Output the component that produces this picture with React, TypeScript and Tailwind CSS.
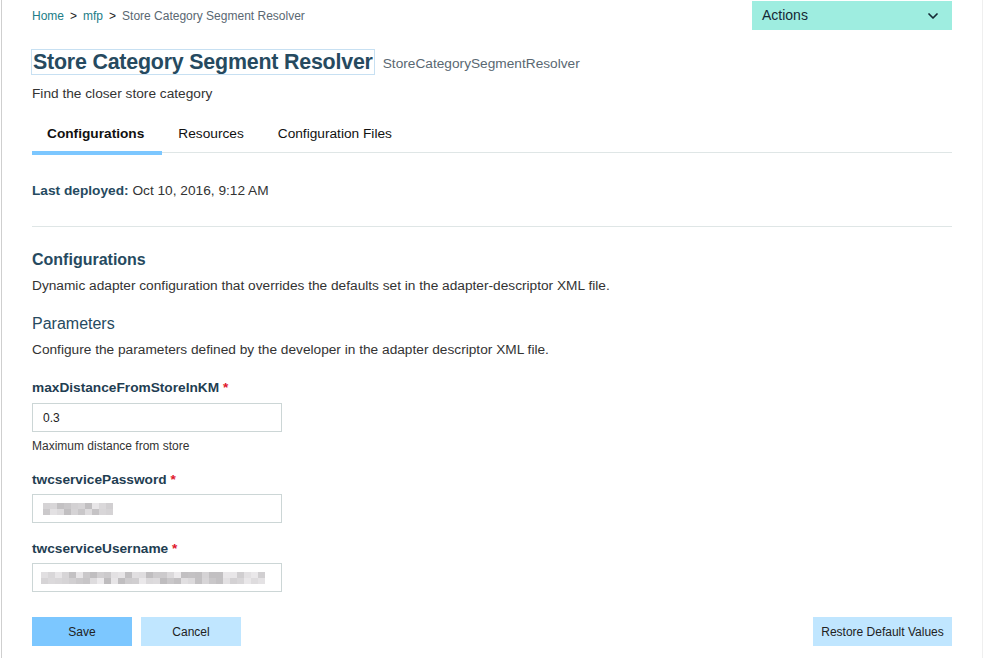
import React from "react";
import { ChevronDown } from "lucide-react";

function Mosaic({ cols, seed }: { cols: number; seed: number }) {
  const cells: string[] = [];
  let s = seed;
  for (let i = 0; i < cols * 2; i++) {
    s = (s * 9301 + 49297) % 233280;
    const v = 190 + Math.floor((s / 233280) * 48);
    cells.push(`rgb(${v},${v - 2},${v})`);
  }
  return (
    <div
      className="grid gap-0"
      style={{ gridTemplateColumns: `repeat(${cols}, 7px)` }}
    >
      {cells.map((c, i) => (
        <div key={i} className="h-[6px] w-[7px]" style={{ backgroundColor: c }} />
      ))}
    </div>
  );
}

export default function App() {
  const font = { fontFamily: '"Liberation Sans", Arial, sans-serif' };
  return (
    <div style={font} className="w-[982px] min-h-[658px] ml-[1px] border-l border-l-[#cfcfcf] border-r border-r-[#efefef] bg-white">
      <div className="pl-[30px] pr-[30px]">
        {/* top row */}
        <div className="flex justify-between items-start">
          <div className="flex items-center h-[31px] text-[12px] text-[#5a6872]">
            <span className="text-[#217d87]">Home</span>
            <span className="mx-[6px] text-[#222]">&gt;</span>
            <span className="text-[#217d87]">mfp</span>
            <span className="mx-[6px] text-[#222]">&gt;</span>
            <span>Store Category Segment Resolver</span>
          </div>
          <div className="mt-[1px] h-[29px] w-[200px] bg-[#9eede0] flex items-center justify-between pl-[10px] pr-[11px] text-[14px] text-[#152935]">
            <span>Actions</span>
            <ChevronDown size={16} strokeWidth={2.6} />
          </div>
        </div>

        {/* title */}
        <div className="mt-[18px] flex items-end">
          <div className="-ml-[1px] h-[26px] border border-[#c7e0f2] flex items-center px-[1px]">
            <span className="text-[21.4px] font-bold text-[#264a60] leading-[24px] tracking-[-0.2px]">
              Store Category Segment Resolver
            </span>
          </div>
          <span className="ml-[8px] text-[13.7px] text-[#5a6872] leading-[20px] mb-[1px]">
            StoreCategorySegmentResolver
          </span>
        </div>
        <div className="mt-[9px] text-[13.7px] leading-[20px] text-[#333]">Find the closer store category</div>

        {/* tabs */}
        <div className="mt-[20px] flex border-b border-b-[#dfe6e6] h-[29px]">
          <div className="pl-[15px] pr-[18px] h-[31px] border-b-4 border-b-[#7cc7ff] text-[13.7px] leading-[20px] font-bold text-[#111]">
            Configurations
          </div>
          <div className="px-[16px] text-[13.7px] leading-[20px] text-[#111]">Resources</div>
          <div className="px-[18px] text-[13.7px] leading-[20px] text-[#111]">Configuration Files</div>
        </div>

        <div className="mt-[28px] text-[13.7px] leading-[20px] text-[#333]">
          <span className="font-bold text-[#264a60]">Last deployed:</span> Oct 10, 2016, 9:12 AM
        </div>
        <div className="mt-[25px] h-px bg-[#dfe6e6]" />

        <div className="mt-[21px] text-[16px] leading-[24px] font-bold text-[#264a60]">Configurations</div>
        <div className="mt-[4px] text-[13.7px] leading-[20px] text-[#333]">
          Dynamic adapter configuration that overrides the defaults set in the adapter-descriptor XML file.
        </div>
        <div className="mt-[16px] text-[16px] leading-[24px] text-[#264a60]">Parameters</div>
        <div className="mt-[4px] text-[13.7px] leading-[20px] text-[#333]">
          Configure the parameters defined by the developer in the adapter descriptor XML file.
        </div>

        {/* field 1 */}
        <div className="mt-[18px] text-[13.7px] leading-[20px] font-bold text-[#1f3e52]">
          maxDistanceFromStoreInKM <span className="text-[#e0182d]">*</span>
        </div>
        <div className="mt-[5px] w-[250px] h-[29px] border border-[#ccd6d6] flex items-center pl-[10px] text-[12px] text-[#222]">
          0.3
        </div>
        <div className="mt-[6px] text-[12px] leading-[16px] text-[#333]">Maximum distance from store</div>

        {/* field 2 */}
        <div className="mt-[16px] text-[13.7px] leading-[20px] font-bold text-[#1f3e52]">
          twcservicePassword <span className="text-[#e0182d]">*</span>
        </div>
        <div className="mt-[4px] w-[250px] h-[29px] border border-[#ccd6d6] flex items-center pl-[10px]">
          <Mosaic cols={10} seed={7} />
        </div>

        {/* field 3 */}
        <div className="mt-[16px] text-[13.7px] leading-[20px] font-bold text-[#1f3e52]">
          twcserviceUsername <span className="text-[#e0182d]">*</span>
        </div>
        <div className="mt-[4px] w-[250px] h-[29px] border border-[#ccd6d6] flex items-center pl-[8px]">
          <Mosaic cols={32} seed={13} />
        </div>

        {/* buttons */}
        <div className="mt-[25px] flex justify-between">
          <div className="flex gap-[9px]">
            <button className="w-[100px] h-[29px] bg-[#7cc7ff] text-[12px] text-[#222]">Save</button>
            <button className="w-[100px] h-[29px] bg-[#c0e6ff] text-[12px] text-[#222]">Cancel</button>
          </div>
          <button className="w-[139px] h-[29px] bg-[#c0e6ff] text-[12px] text-[#222]">Restore Default Values</button>
        </div>
      </div>
    </div>
  );
}
